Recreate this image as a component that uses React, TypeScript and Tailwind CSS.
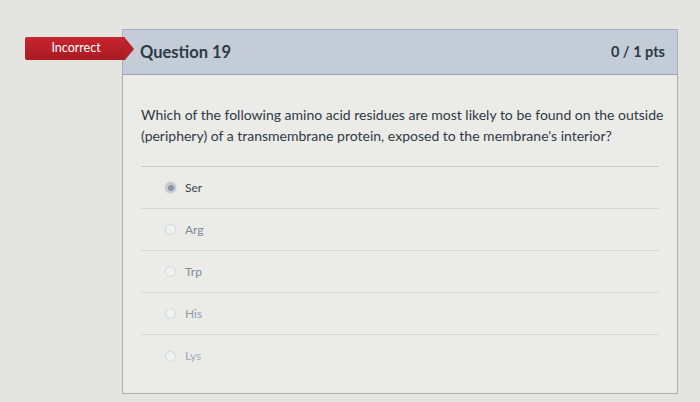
import React from 'react';

const OPTIONS = [
  { id: 'ser', label: 'Ser', selected: true, tone: 'text-[#3d4650]' },
  { id: 'arg', label: 'Arg', selected: false, tone: 'text-[#7d8a96]' },
  { id: 'trp', label: 'Trp', selected: false, tone: 'text-[#7d8a96]' },
  { id: 'his', label: 'His', selected: false, tone: 'text-[#8e9cab]' },
  { id: 'lys', label: 'Lys', selected: false, tone: 'text-[#a3adb8]' },
];

const Radio: React.FC<{ selected: boolean }> = ({ selected }) =>
  selected ? (
    <span className="w-[11px] h-[11px] rounded-full bg-[#c4cad4] flex items-center justify-center shadow-[0_0_2px_rgba(0,0,0,0.15)]">
      <span className="w-[6px] h-[6px] rounded-full bg-[#8c96a6]" />
    </span>
  ) : (
    <span className="w-[11px] h-[11px] rounded-full border border-[#d3d8dd] bg-[#f1f2f0]" />
  );

export default function App() {
  return (
    <div
      className="w-[700px] h-[402px] overflow-hidden bg-[#e4e4e1] pt-[29px] pl-[25px]"
      style={{ fontFamily: 'Lato, "Open Sans", sans-serif' }}
    >
      <div className="flex items-start">
        <div className="relative z-10 mt-[8px] flex items-center">
          <div className="w-[100px] h-[23px] bg-gradient-to-b from-[#c9252f] to-[#a81a23] flex items-center justify-center rounded-l-[2px]">
            <span className="text-white text-[12.5px] leading-none pl-[2px]">Incorrect</span>
          </div>
          <div className="w-0 h-0 border-y-[11.5px] border-y-transparent border-l-[9px] border-l-[#b81f28]" />
        </div>

        <div className="-ml-[12px] w-[556px] h-[365px] border border-[#a9afb6] bg-[#ebebe8] flex flex-col">
          <div className="h-[45px] bg-[#c4ccd8] border-b border-[#9aa3ae] flex items-center justify-between pl-[17px] pr-[12px]">
            <span className="text-[16.5px] font-bold text-[#2d3a45]">Question 19</span>
            <span className="text-[14.5px] font-bold text-[#2d3a45]">0 / 1 pts</span>
          </div>

          <div className="px-[18px] pt-[29px]">
            <p className="text-[14px] leading-[21px] text-[#2f3a44] whitespace-nowrap">
              Which of the following amino acid residues are most likely to be found on the outside
              <br />
              (periphery) of a transmembrane protein, exposed to the membrane's interior?
            </p>

            <div className="mt-[20px] border-t border-[#c6cbcf]">
              {OPTIONS.map((opt, i) => (
                <div
                  key={opt.id}
                  className={`h-[42px] flex items-center gap-[9px] pl-[24px] ${
                    i < OPTIONS.length - 1 ? 'border-b border-[#d2d6d9]' : ''
                  }`}
                >
                  <Radio selected={opt.selected} />
                  <span className={`text-[12px] ${opt.tone}`}>{opt.label}</span>
                </div>
              ))}
            </div>
          </div>
        </div>
      </div>
    </div>
  );
}
